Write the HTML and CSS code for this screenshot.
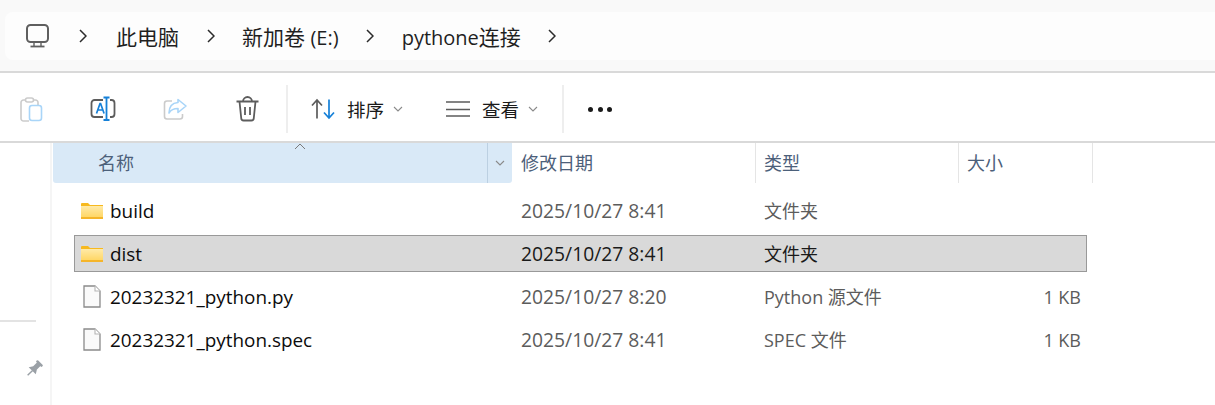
FILE: index.html
```html
<!DOCTYPE html>
<html lang="zh-CN">
<head>
    <meta charset="UTF-8">
    <title>pythone连接</title>
    <link rel="stylesheet" href="styles.css">
</head>
<body>
    <svg class="defs" width="0" height="0">
        <defs>
            <linearGradient id="folder-fill" x1="0" y1="0" x2="0" y2="1">
                <stop offset="0" stop-color="#ffeaa8"/>
                <stop offset="1" stop-color="#ffd766"/>
            </linearGradient>
        </defs>
        <symbol id="chev-right" viewBox="0 0 8 14"><path d="M1 1l6 6-6 6" fill="none" stroke="#2b2b2b" stroke-width="1.5"/></symbol>
        <symbol id="chev-down" viewBox="0 0 10 6"><path d="M1 1l4 4 4-4" fill="none" stroke="#8a8a8a" stroke-width="1.1"/></symbol>
        <symbol id="folder" viewBox="0 0 22 17">
            <path d="M0 2a1 1 0 0 1 1-1h6l2 2h13v14H0z" fill="#f7b91f"/>
            <path d="M0 4h22v11H0z" fill="url(#folder-fill)"/>
            <path d="M0 15h22v2H0z" fill="#f5b52a"/>
        </symbol>
        <symbol id="file" viewBox="0 0 18 23">
            <path d="M1 1h11l5 5v16H1z" fill="#fafafa" stroke="#8a8a8a" stroke-width="1.3"/>
            <path d="M12 1v5h5" fill="#fff" stroke="#b5b5b5" stroke-width="1.1"/>
        </symbol>
    </svg>

    <div class="addressbar">
        <div class="crumbs">
            <svg class="pc" width="24" height="24" viewBox="0 0 24 24" fill="none" stroke="#5f5f5f" stroke-width="2">
                <rect x="1" y="1" width="21" height="17" rx="3.5"/>
                <path d="M8 18v4M15 18v4" stroke-width="1.4"/>
                <path d="M4.500 22.500h14" stroke-width="1.8"/>
            </svg>
            <svg class="chev home" width="8" height="14"><use href="#chev-right"/></svg>
            <span>此电脑</span>
            <svg class="chev" width="8" height="14"><use href="#chev-right"/></svg>
            <span>新加卷 <span class="latin">(E:)</span></span>
            <svg class="chev" width="8" height="14"><use href="#chev-right"/></svg>
            <span><span class="latin">pythone</span>连接</span>
            <svg class="chev" width="8" height="14"><use href="#chev-right"/></svg>
        </div>
    </div>

    <div class="toolbar">
        <button class="tool">
            <svg width="28" height="28" viewBox="0 0 28 28" fill="none">
                <path d="M9 5H6.500A2.500 2.500 0 0 0 4 7.500v16A2.500 2.500 0 0 0 6.500 26H12M17 5h1.500A2.500 2.500 0 0 1 21 7.500V10" stroke="#cbcbcb" stroke-width="1.6"/>
                <rect x="8.500" y="3" width="8" height="4" rx="2" stroke="#cbcbcb" stroke-width="1.6"/>
                <rect x="12.500" y="10.500" width="12" height="15" rx="2.500" stroke="#a9d5f8" stroke-width="1.6"/>
            </svg>
        </button>
        <button class="tool">
            <svg width="28" height="28" viewBox="0 0 28 28" fill="none">
                <path d="M14 5H5.500A3 3 0 0 0 2.500 8v11a3 3 0 0 0 3 3H14M21 5h1.500a3 3 0 0 1 3 3v11a3 3 0 0 1-3 3H21" stroke="#5c5c5c" stroke-width="1.8"/>
                <path d="M7.500 18.500l3.500-10h.6l3.500 10M9 15h5.500" stroke="#1580d8" stroke-width="1.7"/>
                <path d="M14.500 2.500h6M14.500 25h6M17.500 2.500V25" stroke="#1580d8" stroke-width="1.8"/>
            </svg>
        </button>
        <button class="tool">
            <svg width="28" height="28" viewBox="0 0 28 28" fill="none">
                <path d="M11 6H6a2.500 2.500 0 0 0-2.500 2.500v13A2.500 2.500 0 0 0 6 24h13a2.500 2.500 0 0 0 2.500-2.500V19" stroke="#cbcbcb" stroke-width="1.6"/>
                <path d="M17 4.500l8 6.500-8 6.500v-4c-4 0-7 1-9 4.500 0-6 3-10 9-10.500z" stroke="#a9d5f8" stroke-width="1.6" stroke-linejoin="round"/>
            </svg>
        </button>
        <button class="tool">
            <svg width="28" height="28" viewBox="0 0 28 28" fill="none" stroke="#5c5c5c" stroke-width="1.8">
                <path d="M3.500 6.500h22M10 6.500a4.500 4.500 0 0 1 9 0"/>
                <path d="M6.500 6.500l1.700 16.500a2.500 2.500 0 0 0 2.500 2.500h7.600a2.500 2.500 0 0 0 2.500-2.500l1.700-16.500"/>
                <path d="M12 12v8M17 12v8"/>
            </svg>
        </button>
        <div class="sep first"></div>
        <button class="tool wide sort">
            <svg width="24" height="22" viewBox="0 0 24 22" fill="none">
                <path d="M6 20.500V2M1 7.500L6 2l5 5.500" stroke="#5c5c5c" stroke-width="1.7"/>
                <path d="M18 1.500V20M13 14.500l5 5.500 5-5.500" stroke="#1580d8" stroke-width="1.7"/>
            </svg>
            <span>排序</span>
            <svg class="caret" width="10" height="6"><use href="#chev-down"/></svg>
        </button>
        <button class="tool wide view">
            <svg width="24" height="16" viewBox="0 0 24 16" fill="none" stroke="#5c5c5c" stroke-width="1.7">
                <path d="M0 1h24M0 8.500h24M0 15h24"/>
            </svg>
            <span>查看</span>
            <svg class="caret" width="10" height="6"><use href="#chev-down"/></svg>
        </button>
        <div class="sep"></div>
        <div class="dots"><i></i><i></i><i></i></div>
    </div>

    <div class="main">
        <aside class="side">
            <div class="side-line"></div>
            <svg class="pin" width="18" height="18" viewBox="0 0 18 18" fill="#9aa0a6">
                <g transform="rotate(45 9 9)">
                    <rect x="5" y="0" width="8" height="2.500" rx="1"/>
                    <rect x="6.500" y="2" width="5" height="6"/>
                    <path d="M4 11.500L6.500 7.500h5l2.500 4z"/>
                    <rect x="8.300" y="11" width="1.400" height="7"/>
                </g>
            </svg>
        </aside>

        <div class="content">
            <div class="header">
                <div class="hcell hname">
                    <span>名称</span>
                    <svg class="sort-up" width="12" height="7" viewBox="0 0 12 7"><path d="M1 6l5-5 5 5" fill="none" stroke="#7a7a7a" stroke-width="1"/></svg>
                    <div class="hdrop"><svg width="10" height="6"><use href="#chev-down"/></svg></div>
                </div>
                <div class="hcell hdate">修改日期</div>
                <div class="hcell htype">类型</div>
                <div class="hcell hsize">大小</div>
            </div>

            <div class="rows">
                <div class="row">
                    <div class="name"><svg class="ico-folder" width="22" height="17"><use href="#folder"/></svg>build</div>
                    <div class="date">2025/10/27 8:41</div>
                    <div class="type">文件夹</div>
                    <div class="size"></div>
                </div>
                <div class="row selected">
                    <div class="name"><svg class="ico-folder" width="22" height="17"><use href="#folder"/></svg>dist</div>
                    <div class="date">2025/10/27 8:41</div>
                    <div class="type">文件夹</div>
                    <div class="size"></div>
                </div>
                <div class="row">
                    <div class="name"><svg class="ico-file" width="18" height="23"><use href="#file"/></svg>20232321_python.py</div>
                    <div class="date">2025/10/27 8:20</div>
                    <div class="type">Python 源文件</div>
                    <div class="size">1 KB</div>
                </div>
                <div class="row">
                    <div class="name"><svg class="ico-file" width="18" height="23"><use href="#file"/></svg>20232321_python.spec</div>
                    <div class="date">2025/10/27 8:41</div>
                    <div class="type">SPEC 文件</div>
                    <div class="size">1 KB</div>
                </div>
            </div>
        </div>
    </div>
</body>
</html>
```

FILE: styles.css
```css
*{
    margin: 0;
    padding: 0;
    box-sizing: border-box;
}

html, body{
    height: 405px;
    overflow: hidden;
}

body{
    background: #ffffff;
    font-family: "Open Sans", "Noto Sans CJK SC", sans-serif;
    font-size: 18px;
    color: #1a1a1a;
}

.defs{
    display: block;
}

/* address bar */
.addressbar{
    height: 73px;
    background: #f9f9f9;
    border-bottom: 2px solid #d9d9d9;
    padding: 12px 0 0 5px;
}

.crumbs{
    height: 48px;
    background: #fdfdfd;
    border-radius: 8px 0 0 8px;
    display: flex;
    align-items: center;
    gap: 27.500px;
    padding-left: 21px;
    padding-bottom: 1px;
    font-size: 21px;
    color: #1f1f1f;
}

.crumbs .latin{
    font-size: 20px;
}

.crumbs .pc{
    margin-right: 1px;
}

.crumbs .home{
    margin-right: 2px;
}

/* toolbar */
.toolbar{
    height: 70px;
    border-bottom: 2px solid #d9d9d9;
    display: flex;
    align-items: center;
    padding: 4px 0 0 17px;
}

.tool{
    border: 0;
    background: none;
    font: inherit;
    color: inherit;
    display: flex;
    align-items: center;
    width: 72px;
    height: 48px;
    flex-shrink: 0;
}

.tool.wide{
    width: auto;
}

.tool.wide span{
    margin-left: 12px;
    font-size: 18.500px;
}

.caret{
    margin-left: 9px;
}

.sort{
    margin-left: 23px;
}

.view{
    margin-left: 43px;
}

.sep{
    width: 2px;
    height: 48px;
    background: #eeeeee;
    margin-left: 24px;
}

.sep.first{
    margin-left: -19px;
}

.dots{
    display: flex;
    gap: 4.500px;
    margin-left: 24px;
}

.dots i{
    width: 5px;
    height: 5px;
    border-radius: 50%;
    background: #1a1a1a;
}

/* main area */
.main{
    display: flex;
    height: 262px;
}

.side{
    width: 52px;
    flex-shrink: 0;
    border-right: 2px solid #f5f5f5;
    padding-top: 177px;
}

.side-line{
    width: 36px;
    height: 2px;
    background: #e3e3e3;
}

.pin{
    display: block;
    margin: 38px 0 0 25px;
}

.content{
    flex: 1;
    padding-left: 1px;
}

.header{
    display: flex;
    height: 40px;
    color: #4c607a;
}

.hcell{
    padding-left: 8px;
    line-height: 40px;
    border-left: 1px solid #e5e5e5;
}

.hname{
    width: 459px;
    border-left: 0;
    padding-left: 45px;
    background: #d9e9f7;
    border-radius: 0 0 3px 3px;
    position: relative;
}

.sort-up{
    position: absolute;
    left: 241px;
    top: 0;
}

.hdrop{
    position: absolute;
    right: 0;
    top: 0;
    width: 25px;
    height: 40px;
    border-left: 1px solid #bcd0e2;
    display: flex;
    align-items: center;
    justify-content: center;
}

.hdate{
    width: 243px;
    border-left: 0;
    padding-left: 9px;
}

.htype{
    width: 203px;
    padding-left: 8px;
}

.hsize{
    width: 135px;
    border-right: 1px solid #e5e5e5;
}

.rows{
    margin: 9px 0 0 21px;
    display: flex;
    flex-direction: column;
    gap: 6px;
}

.row{
    width: 1013px;
    height: 37px;
    display: flex;
    align-items: center;
    border: 1px solid transparent;
}

.row.selected{
    background: #d9d9d9;
    border-color: #999999;
}

.name{
    width: 437px;
    display: flex;
    align-items: center;
    font-size: 18.900px;
    color: #0c0c0c;
}

.ico-folder{
    margin: 0 7px 0 6px;
}

.ico-file{
    margin: 0 9px 0 8px;
}

.date{
    width: 243px;
    padding-left: 9px;
    font-size: 19.300px;
    color: #5c5c5c;
}

.type{
    width: 203px;
    padding-left: 9px;
    padding-bottom: 2px;
    color: #5c5c5c;
}

.size{
    width: 123px;
    text-align: right;
    color: #5c5c5c;
}

.row.selected .date, .row.selected .type{
    color: #1a1a1a;
}
```
